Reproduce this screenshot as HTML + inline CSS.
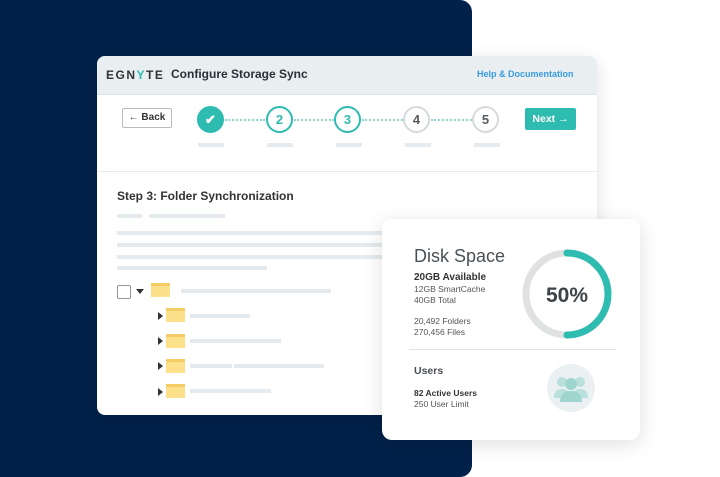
<!DOCTYPE html>
<html><head><style>
*{margin:0;padding:0;box-sizing:border-box}
body{width:720px;height:477px;background:#fff;position:relative;overflow:hidden;font-family:"Liberation Sans",sans-serif;color:#3c4348}
.navy{position:absolute;left:0;top:0;width:472px;height:477px;background:#02214a;border-radius:0 12px 12px 0}
.card{position:absolute;left:97px;top:56px;width:500px;height:359px;background:#fff;border-radius:8px;box-shadow:0 4px 18px rgba(0,0,0,.12);overflow:hidden}
.hdr{height:39px;background:#e9eef1;border-bottom:1px solid #dde3e6;position:relative}
.a{position:absolute}
.bar{position:absolute;background:#e4eaed;height:4px}
.circ{position:absolute;width:27px;height:27px;border-radius:50%;border:2px solid #d6dadd;text-align:center;line-height:23px;font-weight:bold;font-size:13px;color:#555c62;background:#fff}
.t{border-color:#2fbcb0;color:#2fbcb0}
.dot{position:absolute;top:119px;height:0;border-top:2px dotted #8fd8d2}
.fold{position:absolute;width:19px;height:14px;background:#fde08a;border-top:3px solid #f3cc65}
.tri{position:absolute;width:0;height:0;border-top:4px solid transparent;border-bottom:4px solid transparent;border-left:5px solid #333}
.stat{position:absolute;left:382px;top:219px;width:258px;height:221px;background:#fff;border-radius:10px;box-shadow:0 4px 20px rgba(0,0,0,.13)}
.s{font-size:8.5px;color:#555}
</style></head><body>
<div class="navy"></div>
<div class="card">
 <div class="hdr">
  <div class="a" style="left:9px;top:12px;font-size:12px;font-weight:bold;letter-spacing:1.5px;color:#333">EGN<span style="color:#2fbcb0">Y</span>TE</div>
  <div class="a" style="left:74px;top:11px;font-size:12px;font-weight:bold;color:#2a3035">Configure Storage Sync</div>
  <div class="a" style="left:380px;top:13px;font-size:9px;font-weight:bold;color:#3a9be0">Help &amp; Documentation</div>
 </div>
 <div class="a" style="left:25px;top:52px;width:50px;height:20px;border:1px solid #bbb;border-radius:2px;font-size:10px;font-weight:bold;text-align:center;line-height:18px;color:#333">&larr; Back</div>
 <div class="a" style="left:428px;top:52px;width:51px;height:22px;background:#2fbcb0;border-radius:2px;font-size:10.5px;font-weight:bold;text-align:center;line-height:22px;color:#fff">Next &rarr;</div>
</div>
<div class="dot" style="left:225px;width:40px"></div>
<div class="dot" style="left:294px;width:40px"></div>
<div class="dot" style="left:362px;width:41px"></div>
<div class="dot" style="left:431px;width:41px"></div>
<div class="circ t" style="left:197px;top:106px;background:#2fbcb0;color:#fff">&#10004;</div>
<div class="circ t" style="left:266px;top:106px">2</div>
<div class="circ t" style="left:334px;top:106px">3</div>
<div class="circ" style="left:403px;top:106px">4</div>
<div class="circ" style="left:472px;top:106px">5</div>
<div class="bar" style="left:198px;top:143px;width:26px"></div>
<div class="bar" style="left:267px;top:143px;width:26px"></div>
<div class="bar" style="left:336px;top:143px;width:26px"></div>
<div class="bar" style="left:405px;top:143px;width:26px"></div>
<div class="bar" style="left:474px;top:143px;width:26px"></div>
<div class="a" style="left:97px;top:171px;width:500px;border-top:1px solid #e6eaec"></div>
<div class="a" style="left:117px;top:189px;font-size:12px;font-weight:bold;color:#333">Step 3: Folder Synchronization</div>
<div class="bar" style="left:117px;top:214px;width:25px"></div>
<div class="bar" style="left:149px;top:214px;width:76px"></div>
<div class="bar" style="left:117px;top:231px;width:270px"></div>
<div class="bar" style="left:117px;top:243px;width:270px"></div>
<div class="bar" style="left:117px;top:255px;width:270px"></div>
<div class="bar" style="left:117px;top:266px;width:150px"></div>
<div class="a" style="left:117px;top:285px;width:14px;height:14px;border:1px solid #999;border-radius:2px"></div>
<div class="a" style="left:136px;top:289px;border-left:4px solid transparent;border-right:4px solid transparent;border-top:5px solid #333"></div>
<div class="fold" style="left:151px;top:283px"></div>
<div class="bar" style="left:181px;top:289px;width:150px"></div>
<div class="tri" style="left:158px;top:312px"></div><div class="fold" style="left:166px;top:308px"></div><div class="bar" style="left:190px;top:314px;width:60px"></div>
<div class="tri" style="left:158px;top:337px"></div><div class="fold" style="left:166px;top:334px"></div><div class="bar" style="left:190px;top:339px;width:91px"></div>
<div class="tri" style="left:158px;top:362px"></div><div class="fold" style="left:166px;top:359px"></div><div class="bar" style="left:190px;top:364px;width:42px"></div><div class="bar" style="left:234px;top:364px;width:90px"></div>
<div class="tri" style="left:158px;top:388px"></div><div class="fold" style="left:166px;top:384px"></div><div class="bar" style="left:190px;top:389px;width:81px"></div>
<div class="stat">
 <div class="a" style="left:32px;top:27px;font-size:18px;color:#4a5056">Disk Space</div>
 <div class="a" style="left:32px;top:53px;font-size:10px;font-weight:bold;color:#333">20GB Available</div>
 <div class="a s" style="left:32px;top:65px;line-height:11px">12GB SmartCache<br>40GB Total</div>
 <div class="a s" style="left:32px;top:97px;line-height:11px">20,492 Folders<br>270,456 Files</div>
 <svg class="a" style="left:139px;top:29px" width="92" height="92" viewBox="0 0 92 92">
  <circle cx="46" cy="46" r="41" fill="none" stroke="#dfe1e3" stroke-width="7"/>
  <path d="M46 5 A41 41 0 0 1 46 87" fill="none" stroke="#2fbcb0" stroke-width="7" stroke-linecap="round"/>
  <text x="46" y="54" text-anchor="middle" font-family="Liberation Sans" font-weight="bold" font-size="21" fill="#3c4348">50%</text>
 </svg>
 <div class="a" style="left:27px;top:130px;width:207px;border-top:1px solid #e2e5e7"></div>
 <div class="a" style="left:32px;top:146px;font-size:10.5px;font-weight:bold;color:#4a5056">Users</div>
 <div class="a" style="left:32px;top:169px;font-size:8.5px;font-weight:bold;color:#333">82 Active Users</div>
 <div class="a s" style="left:32px;top:180px">250 User Limit</div>
 <svg class="a" style="left:165px;top:145px" width="48" height="48" viewBox="0 0 48 48">
  <circle cx="24" cy="24" r="24" fill="#ebf1f3"/>
  <circle cx="15" cy="18" r="5" fill="#b9e0dc"/><circle cx="33" cy="18" r="5" fill="#b9e0dc"/>
  <path d="M7 34 q0-9 8-9 q8 0 8 9z M25 34 q0-9 8-9 q8 0 8 9z" fill="#b9e0dc"/>
  <circle cx="24" cy="20" r="6" fill="#9fd5cf"/>
  <path d="M13 38 q0-11 11-11 q11 0 11 11z" fill="#9fd5cf"/>
 </svg>
</div>
</body></html>
